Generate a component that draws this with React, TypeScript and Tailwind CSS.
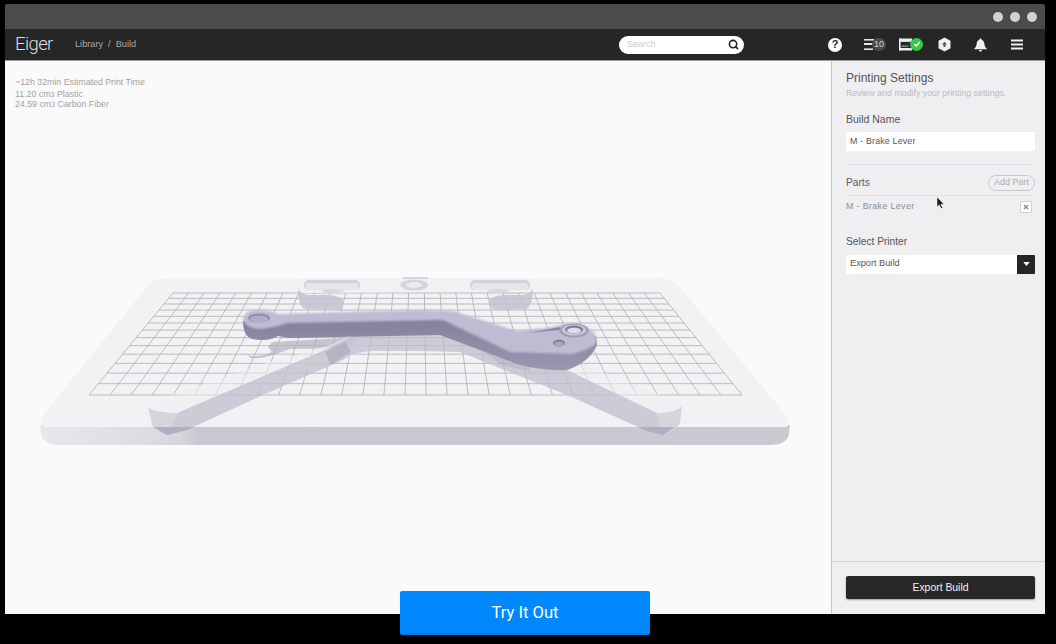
import React from 'react';
import { Search } from 'lucide-react';

const sans = { fontFamily: '"Liberation Sans", Arial, sans-serif' };

// grid lines on the print bed, in screen coordinates
const COLS = 31;
const ROWS = 13;
const rowY = (i: number) => {
  const u = i / ROWS;
  return u / (u + (1 - u) * 1.5);
};

const BedScene: React.FC = () => (
  <svg viewBox="5 61 826 553" className="w-full h-full block">
    <defs>
      <linearGradient id="bedSide" x1="0" x2="1" y1="0" y2="0">
        <stop offset="0" stopColor="#e8e7ec" />
        <stop offset="0.15" stopColor="#dcdbe1" />
        <stop offset="0.19" stopColor="#d6d5dc" />
        <stop offset="0.21" stopColor="#c9c8d0" />
        <stop offset="1" stopColor="#cac9d1" />
      </linearGradient>
      <linearGradient id="leverSide" x1="0" x2="0" y1="0" y2="1">
        <stop offset="0" stopColor="#807e9a" />
        <stop offset="1" stopColor="#9a98b0" />
      </linearGradient>
      <filter id="soft" x="-5%" y="-5%" width="110%" height="110%">
        <feGaussianBlur stdDeviation="0.45" />
      </filter>
      <filter id="softer" x="-5%" y="-5%" width="110%" height="110%">
        <feGaussianBlur stdDeviation="1" />
      </filter>
    </defs>

    <g filter="url(#soft)">
      {/* bed */}
      <path d="M40 425 L41 434 Q43 445 60 445 L770 445 Q787 445 789 434 L790 425 Z" fill="url(#bedSide)" />
      <path d="M163 278 L662 278 Q674 279 684 292 L785 414 Q793 424 786 427 L46 427 Q37 424 44 414 L146 288 Q152 279 163 278 Z" fill="#f2f2f4" />

      {/* grid */}
      <g stroke="#aeaeb3" strokeWidth="0.8" fill="none">
        {Array.from({ length: ROWS + 1 }, (_, i) => {
          const f = rowY(i);
          return <line key={i} x1={173 - 84 * f} x2={660 + 82 * f} y1={293 + 102 * f} y2={293 + 102 * f} />;
        })}
        {Array.from({ length: COLS + 1 }, (_, i) => {
          const t = i / COLS;
          return <line key={i} x1={173 + 487 * t} y1={293} x2={89 + 653 * t} y2={395} />;
        })}
      </g>

      {/* ghost plate behind */}
      <path d="M304 278 L528 278 Q534 281 533 291 L300 293 Q297 283 304 278 Z" fill="#f1f1f4" />
      <path d="M298 289 Q298 304 304 309 L340 310 Q346 304 342 299 Q335 294 320 295 L308 295 Q300 293 298 289 Z" fill="#c3c2cf" fillOpacity="0.85" />
      <path d="M533 289 Q533 304 527 309 L494 310 Q487 304 491 299 Q498 294 512 295 L524 295 Q531 293 533 289 Z" fill="#c3c2cf" fillOpacity="0.85" />
      <rect x="304" y="280" width="56" height="10" rx="5" fill="#d3d2da" />
      <rect x="306" y="283" width="52" height="7" rx="3.5" fill="#e6e6ea" />
      <rect x="470" y="280" width="60" height="10" rx="5" fill="#d3d2da" />
      <rect x="472" y="283" width="56" height="7" rx="3.5" fill="#e6e6ea" />
      <ellipse cx="333" cy="291" rx="11" ry="2" fill="#d8d7df" />
      <ellipse cx="498" cy="291" rx="11" ry="2" fill="#d8d7df" />
      <ellipse cx="414" cy="285" rx="14" ry="5.5" fill="#d6d5dd" />
      <ellipse cx="414" cy="285" rx="8" ry="3" fill="#ecebef" />
      <rect x="403" y="277" width="25" height="2" fill="#d6d5dd" />

      {/* lever shadow on the bed */}
      <path d="M248 355 Q258 358 272 352 L268 347 L272 342 L363 337 L345 348 L290 349 L276 354 Q262 359 250 358 Z" fill="#b3b2bd" fillOpacity="0.7" />

      {/* ghost legs, left */}
      <path d="M148 406 Q150 402 160 399 L255 366 L330 345 L352 335 L370 340 L368 350 L180 414 L158 413 Q149 411 148 406 Z" fill="#eeeef2" fillOpacity="0.55" />
      <path d="M167 435 L187 430 L263 395 L343 360 Q352 352 372 351 L420 351 L420 333 L352 336 L327 349 L177 413 Z" fill="#bebcca" fillOpacity="0.72" />
      <path d="M148 407 Q152 412 177 413 L167 435 Q158 433 153 428 Z" fill="#d6d5de" />
      <path d="M325 352 L345 342 L351 352 L331 365 Z" fill="#a5a3b4" fillOpacity="0.55" />

      {/* ghost legs, right */}
      <path d="M545 360 L587 366 L667 398 Q682 402 682 406 Q680 412 660 413 L575 381 Z" fill="#eeeef2" fillOpacity="0.55" />
      <path d="M420 333 L470 336 L567 370 L657 413 L663 435 L647 431 L567 395 L460 352 L420 351 Z" fill="#bebcca" fillOpacity="0.72" />
      <path d="M657 413 Q676 413 682 406 L680 424 Q672 432 663 435 Z" fill="#d6d5de" />
      <path d="M480 348 L515 345 L532 372 L500 365 Z" fill="#a5a3b4" fillOpacity="0.3" />
      <path d="M153 427 L167 435 L187 430 L194 427 Z" fill="#b0aec0" />
      <path d="M638 427 L647 431 L663 435 L675 427 Z" fill="#b0aec0" />
    </g>

    {/* lever */}
    <g filter="url(#soft)">
      <path d="M243 321 Q243 336 252 339 Q268 342 278 336 L288 338 L440 335 L517 364 Q540 371 567 370 Q590 362 597 345 L596 336 L510 336 L443 314 L280 316 Z" fill="url(#leverSide)" />
      <g filter="url(#softer)">
        <path d="M243 319 Q245 310 257 310 Q271 310 278 314 L420 310 L453 311 L517 331 L552 327 L560 325 Q572 322 585 326 Q597 332 597 342 Q592 349 572 354 L510 352 L443 320 L287 323 Q275 328 257 329 Q245 327 243 319 Z" fill="#bebcd3" />
      </g>
      <ellipse cx="259" cy="318" rx="11" ry="4.6" fill="#8e8ca8" />
      <ellipse cx="259" cy="319" rx="9" ry="3.4" fill="#b0aec6" />
      <path d="M527 333 L560 327 L560 330 Z" fill="#8b89a5" />
      <ellipse cx="574" cy="330.5" rx="14.5" ry="7" fill="#9e9cb6" />
      <ellipse cx="574" cy="330" rx="12" ry="5.6" fill="#c9c7d9" />
      <ellipse cx="574" cy="329.5" rx="9" ry="4" fill="#7e7c98" />
      <ellipse cx="574" cy="330.5" rx="7" ry="2.8" fill="#dedde6" />
      <ellipse cx="559" cy="343" rx="6" ry="3.4" fill="#85839f" />
      <ellipse cx="559" cy="344" rx="4.4" ry="2.2" fill="#a9a7bf" />
    </g>
  </svg>
);

const App: React.FC = () => {
  return (
    <div className="relative w-[1056px] h-[644px] bg-black pt-[4px] pl-[5px] overflow-hidden" style={sans}>
      <div className="w-[1040px] h-[610px] flex flex-col rounded-t-[2px] overflow-hidden">
        {/* title bar */}
        <div className="h-[25px] bg-[#4b4b4b] flex items-center justify-end gap-[7px] pr-[8px]">
          <span className="w-[10px] h-[10px] rounded-full bg-[#d2d2d2]" />
          <span className="w-[10px] h-[10px] rounded-full bg-[#d2d2d2]" />
          <span className="w-[10px] h-[10px] rounded-full bg-[#d2d2d2]" />
        </div>

        {/* nav */}
        <div className="h-[32px] bg-[#262626] border-b border-[#9a9a9a] flex items-center text-[#d8d8d8]">
          <span
            className="ml-[10px] w-[60px] text-[18.5px] font-light text-[#dedede] tracking-[-0.6px]"
            style={{ fontFamily: 'Roboto, sans-serif' }}
          >
            Eiger
          </span>
          <span className="text-[9.2px] text-[#a8a8a8] flex gap-[5px]">
            <span>Library</span>
            <span>/</span>
            <span>Build</span>
          </span>
          <div className="ml-[483px] w-[125px] h-[18px] rounded-full bg-white flex items-center justify-between pl-[8px] pr-[5px]">
            <span className="text-[9px] text-[#cccccc]">Search</span>
            <Search size={11} strokeWidth={3.4} className="text-[#222]" />
          </div>

          {/* help */}
          <span className="ml-[84px] w-[14px] h-[14px] rounded-full bg-white text-[#262626] text-[11px] font-bold flex items-center justify-center">?</span>

          {/* queue */}
          <div className="ml-[22px] flex items-center">
            <svg width="10" height="13" viewBox="0 0 10 13" fill="#e6e6e6">
              <rect x="0" y="1" width="10" height="1.6" />
              <rect x="0" y="5" width="10" height="2" />
              <rect x="0" y="10.4" width="9" height="1.6" />
            </svg>
            <span className="-ml-[2px] w-[14px] h-[13px] rounded-full bg-[#4a4a4a] text-[9px] text-[#d4d4d4] flex items-center justify-center">10</span>
          </div>

          {/* printer status */}
          <div className="ml-[13px] flex items-center">
            <svg width="13" height="13" viewBox="0 0 13 13">
              <rect x="0" y="0.5" width="13" height="3.4" fill="#ececec" />
              <rect x="0" y="0.5" width="1.6" height="12" fill="#ececec" />
              <rect x="0" y="10" width="13" height="2.5" fill="#ececec" />
              <rect x="2.5" y="7.5" width="7" height="1.4" fill="#8a8a8a" />
            </svg>
            <span className="-ml-[2px] -mt-[1px] w-[13px] h-[13px] rounded-full bg-[#35c84a] flex items-center justify-center">
              <svg width="8" height="8" viewBox="0 0 8 8" fill="none" stroke="#fff" strokeWidth="1.5">
                <path d="M1.3 4.2 L3.2 6 L6.8 2" />
              </svg>
            </span>
          </div>

          {/* hexagon */}
          <svg className="ml-[15px]" width="13" height="15" viewBox="0 0 13 15">
            <path d="M6.5 0.5 L12.5 3.8 V11.2 L6.5 14.5 L0.5 11.2 V3.8 Z" fill="#f0f0f0" />
            <path d="M6.5 4.8 L9 7.6 H7.5 V10 H5.5 V7.6 H4 Z" fill="#555" />
          </svg>

          {/* bell */}
          <svg className="ml-[23px]" width="13" height="14" viewBox="0 0 13 14" fill="#f0f0f0">
            <path d="M6.5 0.5 C7.3 0.5 7.6 1.2 7.6 1.8 C9.6 2.4 10.2 4.2 10.4 6 C10.6 8 11.4 9.4 12.6 10.6 V11.2 H0.4 V10.6 C1.6 9.4 2.4 8 2.6 6 C2.8 4.2 3.4 2.4 5.4 1.8 C5.4 1.2 5.7 0.5 6.5 0.5 Z" />
            <path d="M5 12 H8 C8 13 7.3 13.6 6.5 13.6 C5.7 13.6 5 13 5 12 Z" />
          </svg>

          {/* menu */}
          <svg className="ml-[24px]" width="12" height="11" viewBox="0 0 12 11" fill="#f0f0f0">
            <rect x="0" y="0.5" width="12" height="2" />
            <rect x="0" y="4.5" width="12" height="2" />
            <rect x="0" y="8.5" width="12" height="2" />
          </svg>
        </div>

        {/* body */}
        <div className="flex-1 flex min-h-0">
          <div className="relative flex-1 bg-[#fafafa]">
            <BedScene />
            <div className="absolute left-[10px] top-[16px] text-[8.8px] leading-[10px] text-[#a2a2a2]">
              <p className="mb-[2px]">~12h 32min Estimated Print Time</p>
              <p>
                11.20 cm<span className="text-[7px] leading-none">3</span> Plastic
              </p>
              <p>
                24.59 cm<span className="text-[7px] leading-none">3</span> Carbon Fiber
              </p>
            </div>
          </div>

          <aside className="w-[214px] bg-[#efeef1] border-l border-[#c6c6c8] flex flex-col">
            <div className="flex-1 pl-[14px] pr-[10px] pt-[10px]">
              <h2 className="text-[12px] leading-[14px] text-[#555]">Printing Settings</h2>
              <p className="mt-[2px] text-[8.8px] leading-[12px] text-[#bcbcbf]">Review and modify your printing settings.</p>

              <h3 className="mt-[14px] text-[10.5px] leading-[13px] text-[#555]">Build Name</h3>
              <div className="mt-[6px] h-[19px] bg-white flex items-center pl-[4px] text-[8.8px] text-[#555] tracking-[0.2px]">M - Brake Lever</div>
              <div className="mt-[13px] h-px bg-[#e2e1e5]" />

              <div className="mt-[10px] flex items-center justify-between">
                <span className="text-[10.2px] text-[#5a5a5a]">Parts</span>
                <span className="w-[47px] h-[16px] rounded-full border border-[#c9c9cc] text-[9px] text-[#adadb0] flex items-center justify-center">Add Part</span>
              </div>
              <div className="mt-[4px] h-px bg-[#e2e1e5]" />
              <div className="mt-[4px] flex items-center justify-between pr-[3px]">
                <span className="text-[9px] text-[#8e8e90] tracking-[0.3px]">M - Brake Lever</span>
                <span className="w-[12px] h-[12px] bg-white border border-[#d2d2d4] flex items-center justify-center text-[#888]">
                  <svg width="6" height="6" viewBox="0 0 6 6" stroke="currentColor" strokeWidth="1.2">
                    <path d="M1 1 L5 5 M5 1 L1 5" />
                  </svg>
                </span>
              </div>

              <h3 className="mt-[21px] text-[10.2px] leading-[13px] text-[#555]">Select Printer</h3>
              <div className="mt-[7px] h-[19px] bg-white flex items-center justify-between pl-[4px] text-[9.2px] text-[#555]">
                Export Build
                <span className="w-[18px] h-full bg-[#262626] rounded-r-[1px] flex items-center justify-center">
                  <svg width="7" height="4" viewBox="0 0 8 5" fill="#fff">
                    <path d="M0 0 H8 L4 5 Z" />
                  </svg>
                </span>
              </div>
            </div>

            <div className="h-[53px] border-t border-[#d2d1d6] pl-[14px] pr-[10px] pt-[14px]">
              <button className="block w-full h-[23px] bg-[#282828] rounded-[2px] shadow-[0_1px_2px_rgba(0,0,0,0.35)] text-[#f2f2f2] text-[10.4px]">Export Build</button>
            </div>
          </aside>
        </div>
      </div>

      {/* cursor */}
      <svg className="absolute left-[936px] top-[196px]" width="9" height="15" viewBox="0 0 9 15">
        <path d="M1 1 L1 11 L3.4 8.8 L5 12.6 L6.6 12 L5 8.3 L8 8.2 Z" fill="#1c1c1c" stroke="#fff" strokeWidth="0.5" />
      </svg>

      {/* overlay button */}
      <button
        className="absolute left-[400px] top-[591px] w-[250px] h-[44px] pt-[3px] bg-[#0088ff] border-b-2 border-[#007ef0] rounded-[2px] text-white text-[16.6px] flex items-center justify-center"
        style={{ fontFamily: 'Roboto, sans-serif' }}
      >
        Try It Out
      </button>
    </div>
  );
};

export default App;
